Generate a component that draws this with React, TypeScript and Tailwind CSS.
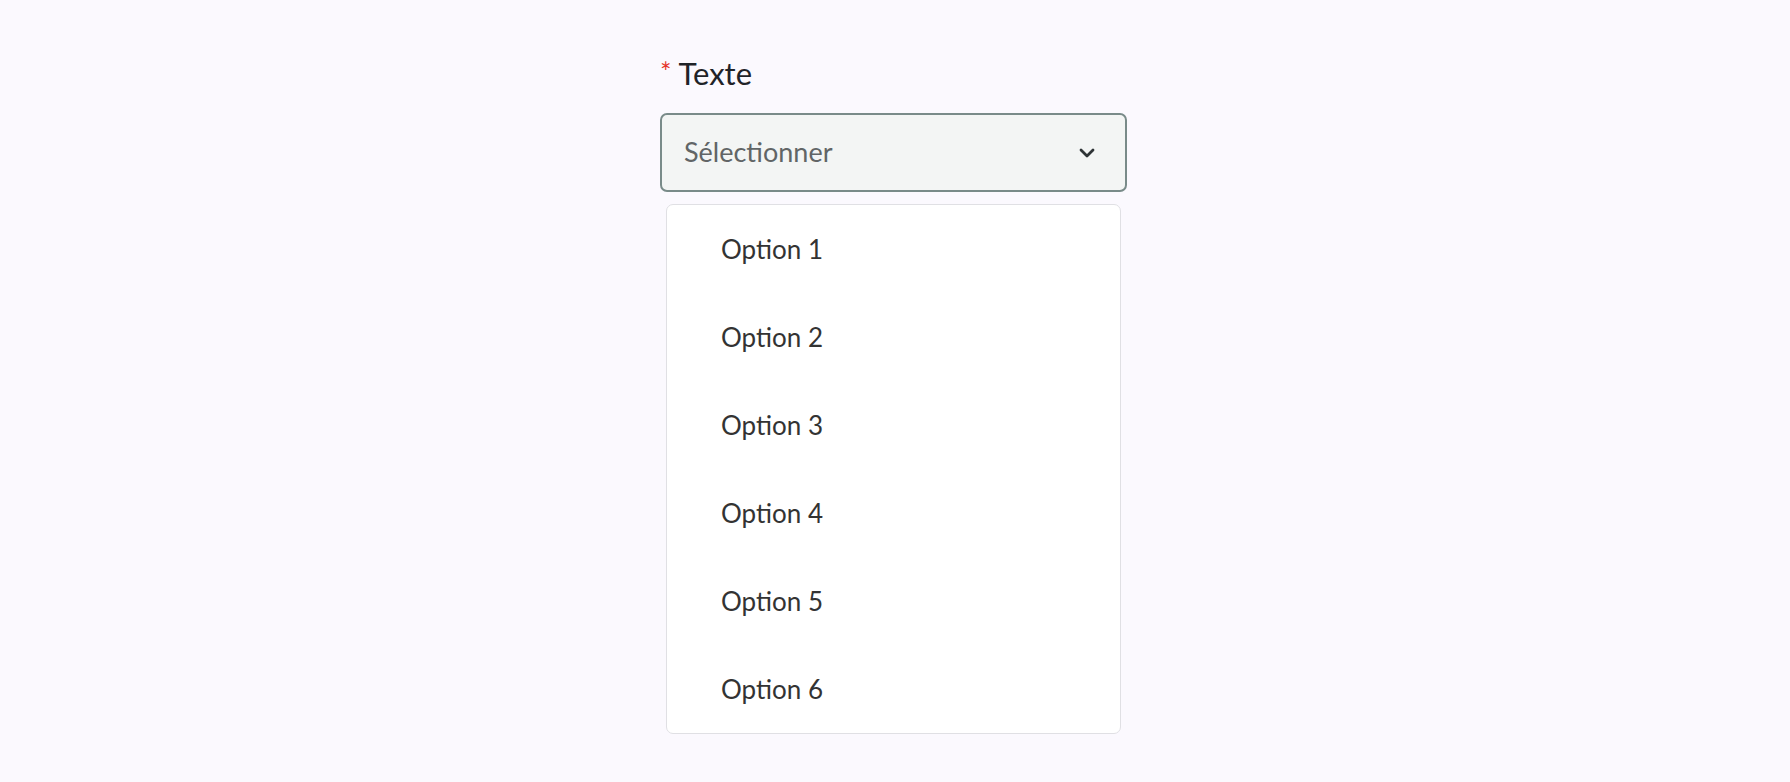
import React from 'react';

const options = ['Option 1', 'Option 2', 'Option 3', 'Option 4', 'Option 5', 'Option 6'];

export default function App() {
  return (
    <div className="min-h-screen w-full bg-[#fbf9fe] flex justify-center" style={{ fontFamily: 'Lato, "Open Sans", sans-serif' }}>
      <div className="w-[467px] mr-[3px] pt-[52px]">
        {/* label */}
        <div className="flex items-start h-[42px]">
          <span className="text-[#e5332a] text-[27px] leading-none mt-[6px] mr-[7px]">*</span>
          <span className="text-[31px] leading-[42px] text-[#1f2328]">Texte</span>
        </div>

        {/* select trigger */}
        <button
          type="button"
          className="mt-[19px] w-full h-[79px] flex items-center justify-between pl-[22px] pr-[30px] bg-[#f3f5f4] border-2 border-[#798b89] rounded-[7px]"
        >
          <span className="text-[27px] text-[#616566]">Sélectionner</span>
          <svg width="16" height="10" viewBox="0 0 16 10" fill="none">
            <polyline points="2,2 8,8 14,2" stroke="#2e3436" strokeWidth="2.8" strokeLinecap="round" strokeLinejoin="round" />
          </svg>
        </button>

        {/* menu */}
        <div className="mx-[6px] mt-[12px] bg-white border border-[#e0e0e4] rounded-[7px]">
          {options.map((o) => (
            <div key={o} className="h-[88px] flex items-center pl-[54px] text-[26px] text-[#333333]">
              {o}
            </div>
          ))}
        </div>
      </div>
    </div>
  );
}
